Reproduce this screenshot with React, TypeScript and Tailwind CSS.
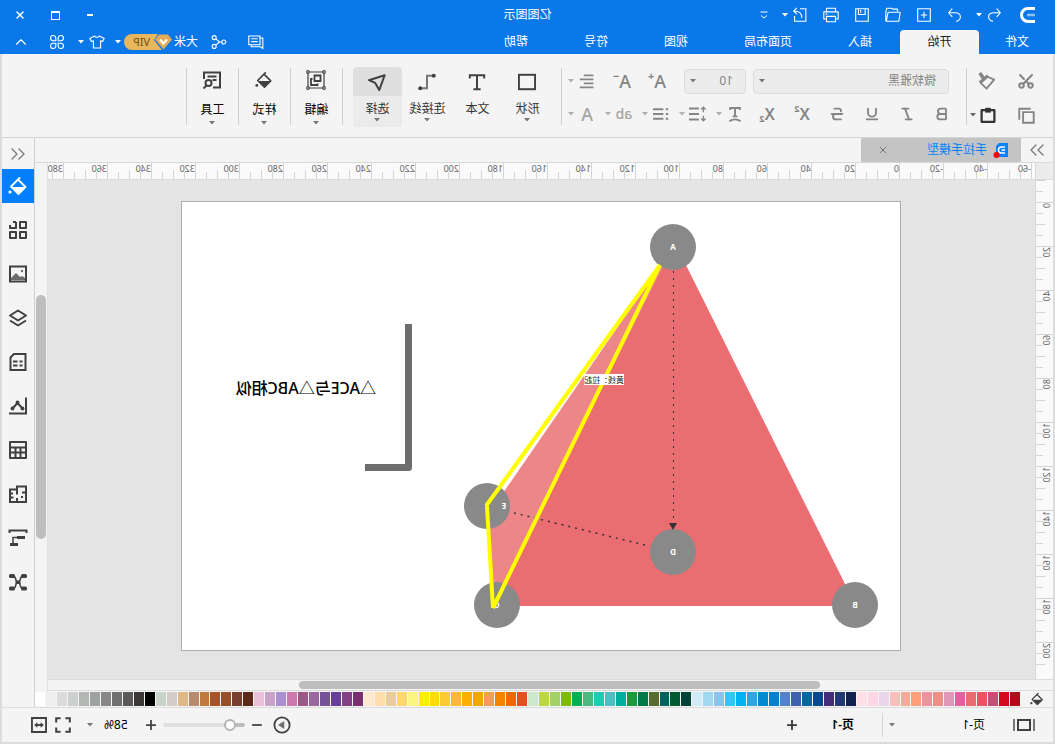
import React, { useState } from 'react';
import { Bold, Italic, Underline, Strikethrough, Scissors, X, ChevronUp, ChevronsLeft, ChevronsRight } from 'lucide-react';

interface IconProps {
  className?: string;
  strokeWidth?: number;
  children: React.ReactNode;
}

const Icon: React.FC<IconProps> = ({ className = 'w-5 h-5', strokeWidth = 2, children }) => (
  <svg
    viewBox="0 0 20 20"
    className={`shrink-0 ${className}`}
    fill="none"
    stroke="currentColor"
    strokeWidth={strokeWidth}
    aria-hidden="true"
  >
    {children}
  </svg>
);

const Caret: React.FC<{ className?: string }> = ({ className = '' }) => (
  <svg viewBox="0 0 6 4" className={`w-[6px] h-[4px] shrink-0 ${className}`} fill="currentColor" aria-hidden="true">
    <path d="M0 0h6L3 3.5z" />
  </svg>
);

const Bucket: React.FC<{ className?: string }> = ({ className }) => (
  <Icon className={className} strokeWidth={1.8}>
    <path d="M8 1.5l3 3M10 3.5L2.500 11l7 7 7.500-7.500-7-7z" strokeLinejoin="round" />
    <path d="M2.500 11H17l-7.500 7z" fill="currentColor" stroke="none" />
    <circle cx="18" cy="16" r="1.6" fill="currentColor" stroke="none" />
  </Icon>
);

const quickActions = [
  {
    label: '撤销',
    caret: true,
    icon: <path d="M7 3L3 7.500l4 4.500M3 7.500h7c4 0 6 2 6 4.500S14 17 11 17" />
  },
  {
    label: '恢复',
    icon: <path d="M13 3l4 4.500-4 4.500M17 7.500h-7c-4 0-6 2-6 4.500S6 17 9 17" />
  },
  {
    label: '新建',
    icon: <path d="M3 3h14v14H3zM10 6.500v7M6.500 10h7" />
  },
  {
    label: '打开',
    icon: <path d="M5 6V3.500h5l1.500-1H17L18 7v10M2 7h13.500l2 10H3.500z" strokeLinejoin="round" />
  },
  {
    label: '保存',
    icon: <path d="M3 3h14v14H3zM6.500 3v6.500h7.500V3M11.500 4.500v3" />
  },
  {
    label: '打印',
    icon: <path d="M5 6.500v-4h10v4M5 14.500H2v-8h16v8h-3M5 11.500h10v6H5zM14 9h2" strokeLinejoin="round" />
  },
  {
    label: '导出',
    caret: true,
    icon: <path d="M10 3H3.500v14H16v-6M8 13c0-5 3-7.500 8.500-7.500M13.500 2L17 5.500 13.500 9" />
  }
];

const menuTabs = [
  { label: '文件', width: 'w-[76px]' },
  { label: '开始', width: 'w-[79px]' },
  { label: '插入', width: 'w-20' },
  { label: '页面布局', width: 'w-[104px]' },
  { label: '视图', width: 'w-20' },
  { label: '符号', width: 'w-20' },
  { label: '帮助', width: 'w-20' }
];

const insertTools = [
  {
    label: '形状',
    caret: true,
    icon: <rect x="1" y="2" width="18" height="16" />
  },
  {
    label: '文本',
    caret: false,
    icon: <path d="M2 6V2.500h16V6M10 2.500v16M6 18h8" />
  },
  {
    label: '连接线',
    caret: true,
    icon: (
      <>
        <path d="M3 3h7v14h6" stroke="#777777" />
        <circle cx="2.500" cy="3" r="2.200" fill="currentColor" stroke="none" />
        <circle cx="17.500" cy="17" r="2.200" fill="currentColor" stroke="none" />
      </>
    )
  },
  {
    label: '选择',
    caret: true,
    icon: <path d="M1.500 2.500L19 8l-7 3-4.500 8z" strokeLinejoin="round" />
  }
];

const groupTools = [
  {
    label: '编辑',
    icon: (
      <>
        <path d="M2 2h16v16H2z" strokeWidth="1.200" />
        <path d="M5.500 5.500h6v5.500h-6zM13.500 9h1.500v6H8.500v-1.500" strokeWidth="1.800" />
        <g fill="#f4f4f4" strokeWidth="1.200">
          <circle cx="2" cy="2" r="1.300" />
          <circle cx="18" cy="2" r="1.300" />
          <circle cx="2" cy="18" r="1.300" />
          <circle cx="18" cy="18" r="1.300" />
        </g>
      </>
    )
  },
  { label: '样式', icon: null },
  {
    label: '工具',
    icon: (
      <>
        <path d="M18 9V2.500H2V17.500h7M5.500 6.500h9M5.500 10h4" />
        <circle cx="13.500" cy="13" r="3" />
        <path d="M15.500 15.500l3 3" />
      </>
    )
  }
];

const sideTools = [
  {
    label: '符号库',
    icon: <path d="M2 2h6v6H2zM12 2h3M18 5v3h-6V2M2 12h6v6H2zM12 12h6v6h-6z" strokeLinejoin="round" />
  },
  {
    label: '图片',
    icon: (
      <>
        <path d="M2 2.500h16v15H2z" />
        <path d="M3 16v-2l3-2 2 1 4-4 5 5v2z" fill="#6b6b6b" stroke="none" />
        <circle cx="6" cy="7" r="1.200" fill="#6b6b6b" stroke="none" />
      </>
    )
  },
  {
    label: '图层',
    icon: <path d="M10 2.500L2 7.500l8 5 8-5zM2 12.500l8 5 8-5" strokeLinejoin="round" />
  },
  {
    label: '页面',
    icon: <path d="M2.500 2h11.500L17.500 5.500v12.500h-15zM5.500 9.500h3M10.500 9.500h4.500M5.500 13.500h3M10.500 13.500h4.500" />
  },
  {
    label: '图表',
    icon: (
      <>
        <path d="M2 1.500V17.500H19M5 13l5.500-6L16 13" />
        <circle cx="5.500" cy="12.500" r="1.900" fill="currentColor" stroke="none" />
        <circle cx="10.500" cy="6.500" r="1.900" fill="currentColor" stroke="none" />
        <circle cx="15.500" cy="12.500" r="1.900" fill="currentColor" stroke="none" />
      </>
    )
  },
  {
    label: '表格',
    icon: <path d="M2 2h16v16H2zM2 7.500h16M2 12.500h16M7.500 7.500V18M12.500 7.500V18" strokeLinejoin="round" />
  },
  {
    label: '平面图',
    icon: <path d="M2 2.500h9v3h7V18h-7v-4M2 1.500V18h9M2 8.500h4M11 5.500v5M6 12v2M15 9.500h3M14.500 13.500h3.500" />
  },
  {
    label: '甘特图',
    icon: (
      <>
        <path d="M1.500 5V2.500h17V5" />
        <path d="M3 8h8v3H3zM10 15h8v3h-8z" fill="currentColor" stroke="none" />
        <path d="M11 9.500h4V15" strokeWidth="1.500" />
      </>
    )
  },
  {
    label: '思维导图',
    icon: (
      <>
        <path
          d="M5 4c4 0 1.500 6 5 6s1-6 5-6M5 16.500c4 0 1.500-6 5-6s1 6 5 6"
          strokeWidth="1.500"
        />
        <rect x="1" y="2" width="6" height="4" rx="1.500" fill="currentColor" stroke="none" />
        <rect x="13" y="2" width="6" height="4" rx="1.500" fill="currentColor" stroke="none" />
        <rect x="1" y="14.500" width="6" height="4" rx="1.500" fill="currentColor" stroke="none" />
        <rect x="13" y="14.500" width="6" height="4" rx="1.500" fill="currentColor" stroke="none" />
        <rect x="7.500" y="8.500" width="5" height="3.500" fill="currentColor" stroke="none" />
      </>
    )
  }
];

const swatches = [
  '#b20a18', '#d60a1e', '#c85078', '#e85464', '#ea6c70', '#e65f9e', '#e198b8', '#ee8f88', '#f2919e', '#ffa07a',
  '#f0ac96', '#f8bfbc', '#ead6ea', '#ffd6e6', '#ffe0e6', '#10234f', '#223a70', '#442d7a', '#08488f', '#0068a4',
  '#3e62ae', '#5482c6', '#0080d0', '#008cd0', '#2ea6e2', '#00b4f4', '#30c8fa', '#8cc2ec', '#a0d8f0', '#d0eaf8',
  '#044238', '#005a30', '#00645c', '#566c30', '#007a46', '#20963e', '#00ae9e', '#50bec0', '#1accb0', '#4aba80',
  '#00b054', '#80ba10', '#a4d068', '#bcd840', '#cce8cc', '#e65020', '#ee6a00', '#f28400', '#f49c54', '#f2a600',
  '#feb000', '#ffb834', '#fccb34', '#ffdc00', '#ffee00', '#fcf480', '#ffd670', '#eacd98', '#ffdcac', '#fee8d0',
  '#783070', '#844084', '#683f98', '#785298', '#98689e', '#9e5888', '#cc7aae', '#aa90d0', '#c8a4c8', '#ecc0da',
  '#5c2818', '#783e30', '#96502a', '#aa5426', '#c07a40', '#b88a70', '#deb886', '#d4ccc6', '#c8d4ca', '#000000',
  '#3c3838', '#5a5858', '#707070', '#888888', '#9ea2a0', '#b4b6b4', '#ccd0ce', '#dcdcdc', '#eeeeee', '#ffffff'
];

const nodes = [
  { id: 'A', x: 228, y: 46, tx: 228 },
  { id: 'B', x: 46, y: 404, tx: 46 },
  { id: 'C', x: 404, y: 404, tx: 404 },
  { id: 'D', x: 228, y: 351, tx: 228 },
  { id: 'E', x: 414, y: 305, tx: 397 }
];

const TitleBar: React.FC = () => (
  <div className="grid grid-cols-[1fr_auto_1fr] items-center h-[30px]">
    <div className="flex items-center pl-[19px] gap-[9px]">
      <svg viewBox="0 0 16 16" className="w-4 h-4 mr-[6px]" fill="none" strokeWidth="3" aria-hidden="true">
        <path d="M1 1.500h7a6.500 6.500 0 0 1 0 13H1" stroke="#ffffff" />
        <path d="M1 8h8" stroke="#8cc2fb" strokeWidth="2.500" />
      </svg>
      {quickActions.map(action => (
        <button key={action.label} aria-label={action.label} className="flex items-center">
          <span className="w-[22px] flex justify-center">
            <Icon className="w-[18px] h-[18px]" strokeWidth={1.2}>{action.icon}</Icon>
          </span>
          {action.caret && <span className="w-[8px] flex justify-center"><Caret className="w-[5px]" /></span>}
        </button>
      ))}
      <button aria-label="自定义快速访问" className="w-4 flex justify-center">
        <Icon className="w-[10px] h-[10px]" strokeWidth={2}>
          <path d="M3 4h14M4 11l6 5 6-5" />
        </Icon>
      </button>
    </div>
    <h1 className="text-xs">亿图图示</h1>
    <div className="flex justify-end pr-[3px]">
      <button aria-label="最小化" className="w-[35px] h-7 flex items-center justify-center">
        <span className="w-[6px] h-[2px] bg-white" />
      </button>
      <button aria-label="最大化" className="w-[35px] h-7 flex items-center justify-center">
        <span className="w-[9px] h-[9px] border border-t-2 border-white" />
      </button>
      <button aria-label="关闭" className="w-[35px] h-7 flex items-center justify-center">
        <X className="w-3 h-3" strokeWidth={3} />
      </button>
    </div>
  </div>
);

const MenuBar: React.FC = () => {
  const [active, setActive] = useState('开始');

  return (
    <div className="flex h-6 text-xs">
      <nav className="flex">
        {menuTabs.map(tab => (
          <button
            key={tab.label}
            onClick={() => setActive(tab.label)}
            className={`${tab.width} ${active === tab.label ? 'bg-[#f4f4f4] text-[#222222] rounded-t-sm' : ''}`}
          >
            {tab.label}
          </button>
        ))}
      </nav>
      <div className="ml-auto flex items-center pr-[9px]">
        <button aria-label="消息" className="w-[22px] mr-[15px] flex justify-center">
          <Icon className="w-4 h-4" strokeWidth={1.4}>
            <path d="M5 2.500h14v11H5zM8 6h8M8 9.500h8M5 5H1.500v13l3-2H16v-2.500" />
          </Icon>
        </button>
        <button aria-label="分享" className="w-[22px] mr-[10px] flex justify-center">
          <Icon className="w-4 h-4" strokeWidth={1.4}>
            <circle cx="4" cy="10" r="2.500" />
            <circle cx="16" cy="4.500" r="2.500" />
            <circle cx="16" cy="15.500" r="2.500" />
            <path d="M6.500 10h3l4.500-4M9.500 10l4.500 4" />
          </Icon>
        </button>
        <button className="mr-[2px]">大米</button>
        <button className="flex items-center">
          <span className="w-12 h-4 flex items-center rounded-full bg-[#e8b65c] text-[#70501a] text-[11px] leading-4">
            <svg viewBox="0 0 18 16" className="w-[18px] h-4 shrink-0" aria-hidden="true">
              <path d="M0 0h14l4 6-8 10H0z" fill="#0b78ea" />
              <path d="M4 .5h9l4 5-8.500 10L0 5.500z" fill="#e0aa56" />
              <path d="M5 5.500l3.500 4 3.500-4" fill="none" stroke="#ffffff" strokeWidth="2.200" />
            </svg>
            <span className="px-1">VIP</span>
          </span>
          <span className="w-3 flex justify-center"><Caret className="w-[5px]" /></span>
        </button>
        <button aria-label="皮肤" className="ml-1 flex items-center">
          <span className="w-[22px] flex justify-center">
            <Icon className="w-4 h-4" strokeWidth={1.4}>
              <path d="M7 2.500L1 5.500l2 4 2.500-1V17.500h9V8.500l2.500 1 2-4-6-3c-1 2-5 2-6 0z" strokeLinejoin="round" />
            </Icon>
          </span>
          <span className="w-[10px] flex justify-center"><Caret className="w-[5px]" /></span>
        </button>
        <button aria-label="应用" className="w-6 ml-[7px] flex justify-center">
          <Icon className="w-4 h-4" strokeWidth={1.4}>
            <path d="M8.500 8.500H5A3.300 3.300 0 1 1 8.500 5zM11.500 8.500H15A3.300 3.300 0 1 0 11.500 5zM8.500 11.500H5A3.300 3.300 0 1 0 8.500 15zM11.500 11.500H15A3.300 3.300 0 1 1 11.500 15z" />
          </Icon>
        </button>
        <button aria-label="收起功能区" className="w-6 ml-3 flex justify-center">
          <ChevronUp className="w-[18px] h-[18px]" strokeWidth={1.5} />
        </button>
      </div>
    </div>
  );
};

const Divider: React.FC = () => <span className="w-px h-[57px] bg-[#cfcfcf] shrink-0" />;

const FormatButton: React.FC<{ label: string; caret?: boolean; children: React.ReactNode }> = ({ label, caret, children }) => (
  <button aria-label={label} className="flex items-center h-[26px] text-[#858585]">
    <span className="w-[22px] flex justify-center">{children}</span>
    {caret && <span className="w-[9px] flex justify-center text-[#b0b0b0]"><Caret className="w-[5px]" /></span>}
  </button>
);

const Ribbon: React.FC = () => {
  const [tool, setTool] = useState('选择');

  return (
    <div className="flex items-start h-[84px] pt-[14px] border-b border-[#d4d4d4] text-xs text-[#333333]">
      {/* Clipboard */}
      <div className="w-[86px] pl-[18px] grid grid-cols-[39px_1fr] gap-y-2 text-[#858585]">
        <button aria-label="剪切" className="h-[26px] flex items-center">
          <Scissors className="w-[18px] h-[18px] -rotate-90" strokeWidth={2.8} />
        </button>
        <button aria-label="格式刷" className="h-[26px] flex items-center">
          <Icon className="w-[18px] h-[18px]" strokeWidth={2}>
            <path d="M2 8.500l8-3.500 7 7-6.500 6.500z" strokeLinejoin="round" />
            <path d="M9 4l9 8" strokeWidth="3.500" />
            <path d="M13.500 7.500l3.500-5" strokeWidth="4" strokeLinecap="round" />
          </Icon>
        </button>
        <button aria-label="复制" className="h-[26px] flex items-center">
          <Icon className="w-[17px] h-[17px]" strokeWidth={2.2}>
            <path d="M1.500 6h12.500v12.500H1.500zM5 2h13.500v13" />
          </Icon>
        </button>
        <button aria-label="粘贴" className="h-[26px] flex items-center gap-1 text-[#333333]">
          <Icon className="w-4 h-[18px]" strokeWidth={2.8}>
            <path d="M2 4h16v14.500H2z" strokeLinejoin="round" />
            <path d="M6.500 1h7v6h-7z" fill="currentColor" stroke="none" />
          </Icon>
          <Caret className="w-[5px] text-[#666666]" />
        </button>
      </div>
      <Divider />

      {/* Font */}
      <div className="w-[404px] pl-[13px]">
        <div className="flex items-center h-[26px] pl-1">
          <div className="relative w-[196px] mr-[7px]">
            <select aria-label="字体" className="appearance-none w-full h-[25px] pl-3 rounded-sm border border-[#dcdce0] bg-[#ececec] text-[#858585]">
              <option>微软雅黑</option>
            </select>
            <Caret className="absolute right-[6px] top-[10px] text-[#777777]" />
          </div>
          <div className="relative w-[62px] mr-4">
            <select aria-label="字号" className="appearance-none w-full h-[25px] pl-3 rounded-sm border border-[#dcdce0] bg-[#ececec] text-[#858585]">
              <option>10</option>
            </select>
            <Caret className="absolute right-[6px] top-[10px] text-[#777777]" />
          </div>
          <div className="flex gap-[13px]">
            <FormatButton label="增大字号">
              <span className="text-lg leading-5 font-medium">A</span>
              <span className="text-[11px] leading-[10px] font-bold">+</span>
            </FormatButton>
            <FormatButton label="减小字号">
              <span className="text-lg leading-5 font-medium">A</span>
              <span className="text-[11px] leading-[10px] font-bold">−</span>
            </FormatButton>
            <FormatButton label="对齐" caret>
              <Icon className="w-4 h-4" strokeWidth={2.4}>
                <path d="M2 3h12M2 8h17M2 13h12M2 18h17" />
              </Icon>
            </FormatButton>
          </div>
        </div>
        <div className="flex items-center gap-[10px] h-[26px] mt-[7px]">
          <div className="flex gap-[13px]">
            <FormatButton label="加粗"><Bold className="w-4 h-4" strokeWidth={2.8} /></FormatButton>
            <FormatButton label="斜体"><Italic className="w-4 h-4" strokeWidth={2.8} /></FormatButton>
            <FormatButton label="下划线"><Underline className="w-4 h-4" strokeWidth={2.8} /></FormatButton>
            <FormatButton label="删除线"><Strikethrough className="w-4 h-4" strokeWidth={2.8} /></FormatButton>
            <FormatButton label="上标">
              <span className="text-base leading-5 font-semibold">X</span>
              <span className="text-[9px] leading-[10px] font-bold">2</span>
            </FormatButton>
            <FormatButton label="下标">
              <span className="text-base leading-5 font-semibold">X</span>
              <span className="self-end text-[9px] leading-[10px] font-bold">2</span>
            </FormatButton>
          </div>
          <div className="flex gap-[6px]">
            <FormatButton label="文字方向" caret>
              <Icon className="w-4 h-4" strokeWidth={2.4}>
                <path d="M4 5V2.500h12V5M10 2v10.500M7 13h6M3 19c4-3 10-3 14 0" />
              </Icon>
            </FormatButton>
            <FormatButton label="行距" caret>
              <Icon className="w-[18px] h-[18px]" strokeWidth={2.2}>
                <path d="M9 4h11M9 10h11M9 16h11" />
                <path d="M4 3v5M4 12v5M1.500 5L4 2.500 6.500 5M1.500 15L4 17.500 6.500 15" strokeWidth="1.500" />
              </Icon>
            </FormatButton>
            <FormatButton label="项目符号" caret>
              <Icon className="w-4 h-4" strokeWidth={2.4}>
                <path d="M7 4h13M7 10h13M7 16h13M1 4h3M1 10h3M1 16h3" />
              </Icon>
            </FormatButton>
            <FormatButton label="突出显示" caret>
              <span className="text-sm font-medium text-[#a4a4a4]">ab</span>
            </FormatButton>
            <FormatButton label="字体颜色" caret>
              <span className="text-lg leading-5 font-medium text-[#a4a4a4]">A</span>
            </FormatButton>
          </div>
        </div>
      </div>
      <Divider />

      {/* Insert tools */}
      <div className="flex gap-px pl-[9px] pr-[10px]">
        {insertTools.map(item => (
          <button
            key={item.label}
            onClick={() => setTool(item.label)}
            className={`w-[49px] h-[60px] -mt-px flex flex-col items-center rounded-sm ${tool === item.label ? 'bg-[#ebebeb]' : ''}`}
          >
            <span className={`w-full h-[29px] flex items-center justify-center rounded-t-sm text-[#404040] ${tool === item.label ? 'bg-[#dfdfdf]' : ''}`}>
              <Icon className="w-[18px] h-[18px]" strokeWidth={2.2}>{item.icon}</Icon>
            </span>
            <span className="mt-1 leading-[18px] whitespace-nowrap">{item.label}</span>
            {item.caret && <Caret className="text-[#777777]" />}
          </button>
        ))}
      </div>
      <Divider />

      {/* Groups */}
      {groupTools.map(item => (
        <React.Fragment key={item.label}>
          <button className="w-[51px] h-[60px] flex flex-col items-center text-black">
            <span className="h-[23px] flex items-center text-[#404040]">
              {item.icon ? <Icon>{item.icon}</Icon> : <Bucket className="w-[18px] h-[18px]" />}
            </span>
            <span className="mt-[10px] mb-[2px] leading-[18px]">{item.label}</span>
            <Caret className="text-[#777777]" />
          </button>
          <Divider />
        </React.Fragment>
      ))}
    </div>
  );
};

const DocumentTabs: React.FC = () => (
  <div className="flex h-[25px] border-b border-[#d9d9d9] text-xs">
    <button aria-label="展开面板" className="w-8 flex items-center justify-center text-[#777777]">
      <ChevronsRight className="w-6 h-6" strokeWidth={1.3} />
    </button>
    <div className="w-40 flex items-center pl-[13px] pr-4 bg-[#c4c4c4] text-[#0a80ff]">
      <svg viewBox="0 0 15 16" className="w-[15px] h-4 mr-[6px]" aria-hidden="true">
        <path d="M0 1h9l3 3v11H0z" fill="#0a80ff" />
        <path d="M3 5h3.500a3 3 0 0 1 0 6H3M3 8h3.500" fill="none" stroke="#ffffff" strokeWidth="1.500" />
        <circle cx="11.500" cy="13" r="3" fill="#ff0000" />
      </svg>
      <a href="#doc" className="whitespace-nowrap">手拉手模型</a>
      <button aria-label="关闭文档" className="ml-auto text-[#777777]">
        <X className="w-3 h-3" strokeWidth={2} />
      </button>
    </div>
  </div>
);

const HorizontalRuler: React.FC = () => (
  <div className="flex items-end h-[17px] min-w-0 overflow-hidden border-b border-[#d9d9d9] bg-[#fafafa] pl-[3px]">
    {Array.from({ length: 90 }, (_, i) => i - 12).map(i => (
      <div
        key={i}
        className={`w-[11px] shrink-0 border-l border-[#d4d4d4] ${i % 4 === 0 ? 'h-4' : i % 2 === 0 ? 'h-[9px]' : 'h-[7px]'}`}
      >
        {i % 4 === 0 && <span className="block text-[9px] leading-[11px] whitespace-nowrap">{i * 5}</span>}
      </div>
    ))}
  </div>
);

const VerticalRuler: React.FC = () => (
  <div className="min-h-0 overflow-hidden flex flex-col items-end border-r border-[#d9d9d9] bg-[#fafafa]">
    {Array.from({ length: 45 }, (_, i) => i - 2).map(i => (
      <div
        key={i}
        className={`h-[11px] shrink-0 border-t border-[#d4d4d4] ${i % 4 === 0 ? 'w-[17px]' : i % 2 === 0 ? 'w-[9px]' : 'w-[7px]'}`}
      >
        {i % 4 === 0 && (
          <span className="block pl-px text-[9px] leading-[11px] whitespace-nowrap [writing-mode:vertical-rl]">{i * 5}</span>
        )}
      </div>
    ))}
  </div>
);

const Drawing: React.FC = () => (
  <svg viewBox="0 0 720 450" className="w-[720px] h-[450px] shrink-0 bg-white outline -outline-offset-1 outline-[#adadad]">
    <path d="M228 38L45 405h366z" fill="#ea6d71" />
    <path d="M228 46l186 269-5 90z" fill="#ed8689" />
    {nodes.map(node => (
      <circle key={node.id} cx={node.x} cy={node.y} r="23" fill="#898989" />
    ))}
    <g fill="#ffffff" fontSize="8" fontWeight="700" textAnchor="middle">
      {nodes.map(node => (
        <text key={node.id} x={node.tx} y={node.y + 3}>{node.id}</text>
      ))}
    </g>
    <g stroke="#333333" strokeDasharray="2 5" fill="none">
      <path d="M227.500 70v253" strokeWidth="1" />
      <path d="M256 344l131-32" strokeWidth="1.500" />
    </g>
    <path d="M224 322h8l-4 7z" fill="#333333" />
    <path d="M241 64l174 241M414 305l-6 102M408 407L241 64" stroke="#ffff00" strokeWidth="4" fill="none" />
    <rect x="277" y="173" width="40" height="11" fill="#ffffff" />
    <text x="277" y="182" fontSize="8" fill="#222222">黄线：拉起</text>
    <path d="M492.500 123v143.500H536" stroke="#6d6d6d" strokeWidth="7" strokeLinejoin="round" fill="none" />
    <text x="525" y="193" fontSize="16" fontWeight="500" fill="#000000">△ACE与△ABC相似</text>
  </svg>
);

const StatusBar: React.FC = () => {
  const [zoom, setZoom] = useState(13);

  return (
    <footer className="flex items-center h-[37px] border-t border-b-2 border-[#dcdcdc] pl-[18px] pr-[29px] text-xs text-black">
      <button aria-label="页面视图" className="text-[#404040]">
        <svg viewBox="0 0 22 12" className="w-[22px] h-3" fill="none" stroke="currentColor" strokeWidth="2" aria-hidden="true">
          <path d="M5 1h12v10H5z" />
          <path d="M1 0v12M21 0v12" stroke="#777777" />
        </svg>
      </button>
      <button className="w-[102px] ml-7 flex items-center justify-between">
        <span>页-1</span>
        <Caret className="mr-[6px] text-[#777777]" />
      </button>
      <span className="w-px h-6 bg-[#d4d4d4]" />
      <button className="ml-7 font-semibold">页-1</button>
      <button aria-label="添加页面" className="ml-8 text-[#333333]">
        <Icon className="w-[14px] h-[14px]" strokeWidth={2.5}><path d="M10 3v14M3 10h14" /></Icon>
      </button>

      <div className="ml-auto flex items-center text-[#404040]">
        <button aria-label="演示" className="mr-[9px]">
          <Icon className="w-[18px] h-[18px]" strokeWidth={2}>
            <circle cx="10" cy="10" r="8.500" />
            <path d="M7.500 5.500v9l7-4.500z" fill="#707070" stroke="none" />
          </Icon>
        </button>
        <button aria-label="缩小">
          <Icon className="w-[14px] h-[14px]" strokeWidth={2.5}><path d="M3 10h14" /></Icon>
        </button>
        <input
          type="range"
          aria-label="缩放"
          value={zoom}
          onChange={e => setZoom(Number(e.target.value))}
          className="w-[82px] h-1 mx-[5px] appearance-none rounded-full bg-[linear-gradient(to_right,#bdbdbd_18%,#dedede_18%)] [&::-webkit-slider-thumb]:appearance-none [&::-webkit-slider-thumb]:w-3 [&::-webkit-slider-thumb]:h-3 [&::-webkit-slider-thumb]:rounded-full [&::-webkit-slider-thumb]:border-2 [&::-webkit-slider-thumb]:border-[#b4b4b4] [&::-webkit-slider-thumb]:bg-white"
        />
        <button aria-label="放大">
          <Icon className="w-[14px] h-[14px]" strokeWidth={2.5}><path d="M10 3v14M3 10h14" /></Icon>
        </button>
        <button className="ml-4 flex items-center gap-[11px] text-black">
          58%
          <Caret className="text-[#777777]" />
        </button>
        <button aria-label="全屏" className="ml-4">
          <Icon className="w-4 h-4" strokeWidth={2.5}>
            <path d="M1.500 7V1.500H7M13 1.500h5.500V7M18.500 13v5.500H13M7 18.500H1.500V13" />
          </Icon>
        </button>
        <button aria-label="适合宽度" className="ml-2">
          <Icon className="w-4 h-4" strokeWidth={2.3}>
            <path d="M1.200 1.200h17.600v17.600H1.200z" />
            <path d="M5 10h10" />
            <path d="M8 6.500v7L4 10zM12 6.500v7l4-3.500z" fill="currentColor" stroke="none" />
          </Icon>
        </button>
      </div>
    </footer>
  );
};

export default function App() {
  return (
    <div className="h-screen flex flex-col -scale-x-100 overflow-hidden bg-[#f4f4f4] font-['Noto_Sans','Noto_Sans_CJK_SC',sans-serif]">
      <header className="bg-[#0b78ea] text-white">
        <TitleBar />
        <MenuBar />
      </header>

      <div className="flex-1 min-h-0 flex flex-col border-x-2 border-[#dcdcdc]">
        <Ribbon />

        <div className="flex-1 min-h-0 flex">
          <main className="flex-1 min-w-0 flex flex-col">
            <DocumentTabs />
            <div className="flex-1 min-h-0 flex">
              <div className="flex-1 min-w-0 grid grid-cols-[18px_1fr] grid-rows-[17px_1fr_12px] text-[#666666]">
                <div className="bg-[#ececec] border-r border-b border-[#d9d9d9]" />
                <HorizontalRuler />
                <VerticalRuler />
                <div className="min-h-0 overflow-hidden flex justify-center items-start pt-[21px] bg-[#e4e4e4]">
                  <Drawing />
                </div>
                <div className="col-span-2 border-y border-[#dcdcdc] flex items-center pl-[3px]">
                  <div className="ml-[23%] w-[52%] h-2 rounded-full bg-[#bebebe]" />
                </div>
              </div>
              <div className="w-[13px] flex flex-col items-center border-l border-[#e0e0e0]">
                <div className="grow-[13] basis-0" />
                <div className="grow-[24] basis-0 w-[10px] rounded-full bg-[#bebebe]" />
                <div className="grow-[15] basis-0" />
              </div>
            </div>

            {/* Color palette */}
            <div className="flex items-center h-4">
              <button aria-label="填充颜色" className="w-8 mr-px flex justify-center text-[#404040]">
                <Bucket className="w-[14px] h-[14px]" />
              </button>
              <div className="flex-1 flex gap-px h-[14px]">
                {swatches.map(color => (
                  <button key={color} aria-label={color} className="flex-1" style={{ backgroundColor: color }} />
                ))}
              </div>
            </div>
          </main>

          {/* Side toolbar */}
          <aside className="w-[33px] border-l border-[#cfcfcf] flex flex-col items-center text-[#404040]">
            <button aria-label="收起面板" className="h-[31px] flex items-center text-[#777777]">
              <ChevronsLeft className="w-6 h-6" strokeWidth={1.3} />
            </button>
            <button aria-label="填充" className="w-full h-[34px] mb-[5px] flex items-center justify-center bg-[#0080ff] text-white">
              <Bucket />
            </button>
            {sideTools.map(item => (
              <button key={item.label} aria-label={item.label} className="w-full h-11 flex items-center justify-center">
                <Icon strokeWidth={2}>{item.icon}</Icon>
              </button>
            ))}
          </aside>
        </div>

        <StatusBar />
      </div>
    </div>
  );
}
